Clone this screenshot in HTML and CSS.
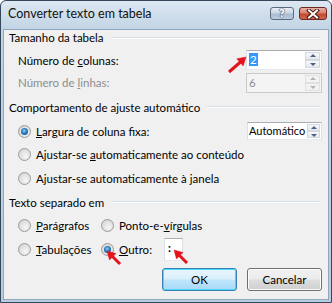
FILE: index.html
```html
<!DOCTYPE html>
<html>
<head>
<meta charset="utf-8">
<link rel="stylesheet" href="styles.css">
</head>
<body>
<div class="win">
  <div class="titlebar">
    <span class="title">Converter texto em tabela</span>
    <div class="tbtns">
      <div class="tb help"><span>?</span></div>
      <div class="tb close">
        <svg width="14" height="10" viewBox="0 0 14 10"><path d="M3 1.5 L11 8.5 M11 1.5 L3 8.5" stroke="#4a1a12" stroke-width="4" stroke-linecap="square"/><path d="M3 1.5 L11 8.5 M11 1.5 L3 8.5" stroke="#ffffff" stroke-width="2" stroke-linecap="square"/></svg>
      </div>
    </div>
  </div>
  <div class="client">
    <div class="ghead h1"><span>Tamanho da tabela</span><i class="rule"></i></div>
    <div class="row r-col">
      <span class="lbl">Número de <u>c</u>olunas:</span>
      <div class="spin"><span class="val"><span class="sel">2</span></span><div class="sbtns"><b class="up"></b><b class="dn"></b></div></div>
    </div>
    <div class="row r-lin">
      <span class="lbl dis">Número de <u>l</u>inhas:</span>
      <div class="spin disabled"><span class="val">6</span><div class="sbtns"><b class="up"></b><b class="dn"></b></div></div>
    </div>
    <div class="ghead h2"><span>Comportamento de ajuste automático</span><i class="rule"></i></div>
    <div class="row r-1">
      <label class="radio"><i class="rb on"></i><span><u>L</u>argura de coluna fixa:</span></label>
      <div class="spin auto"><span class="val">Automático</span><div class="sbtns"><b class="up"></b><b class="dn"></b></div></div>
    </div>
    <div class="row r-2">
      <label class="radio"><i class="rb"></i><span>Ajustar-se <u>a</u>utomaticamente ao conteúdo</span></label>
    </div>
    <div class="row r-3">
      <label class="radio"><i class="rb"></i><span>Ajustar-se automaticamente à <u>j</u>anela</span></label>
    </div>
    <div class="ghead h3"><span>Texto separado em</span><i class="rule"></i></div>
    <div class="row r-p">
      <label class="radio c1"><i class="rb"></i><span><u>P</u>arágrafos</span></label>
      <label class="radio"><i class="rb"></i><span>Ponto-e-<u>v</u>írgulas</span></label>
    </div>
    <div class="row r-t">
      <label class="radio c1"><i class="rb"></i><span><u>T</u>abulações</span></label>
      <label class="radio c2"><i class="rb on"></i><span><u>O</u>utro:</span></label>
      <div class="other">:</div>
    </div>
    <div class="buttons">
      <div class="btn def">OK</div>
      <div class="btn">Cancelar</div>
    </div>
  </div>
  <svg class="arrows" width="332" height="303" viewBox="0 0 332 303">
    <g fill="#e3141c" stroke="#e3141c">
      <line x1="229" y1="72" x2="240.5" y2="62" stroke-width="3"/>
      <polygon points="246,57 243.2,66 236.8,58.8" stroke-width="0.5"/>
      <line x1="120" y1="264" x2="112.5" y2="256.5" stroke-width="3"/>
      <polygon points="107,251 116,253.5 109.5,260" stroke-width="0.5"/>
      <line x1="187" y1="263" x2="179.5" y2="255.5" stroke-width="3"/>
      <polygon points="174,250 183,252.5 176.5,259" stroke-width="0.5"/>
    </g>
  </svg>
</div>
</body>
</html>
```

FILE: styles.css
```css
* { box-sizing: border-box; }
html, body { margin: 0; padding: 0; }
body {
  width: 332px;
  height: 303px;
  overflow: hidden;
  background: #ffffff;
  font-family: Lato, "Noto Sans", sans-serif;
  font-size: 11.5px;
  color: #000;
}
u { text-decoration: underline; text-underline-offset: 1px; }

.win {
  position: relative;
  width: 332px;
  height: 303px;
  border: 1px solid #34475a;
  border-radius: 6px 6px 0 0;
  background: linear-gradient(#dde8f2 0px, #cfdeeb 14px, #c2d4e5 28px, #b9cde0 100%);
  display: flex;
  flex-direction: column;
  padding: 0 2px 2px 2px;
}

.titlebar {
  height: 28px;
  display: flex;
  justify-content: space-between;
  align-items: flex-start;
  padding-left: 5px;
}
.title { line-height: 26px; font-size: 12.5px; color: #111; }
.tbtns { display: flex; gap: 5px; padding-top: 6px; padding-right: 2px; }
.tb {
  height: 13px;
  border: 1px solid #5a6a7c;
  border-radius: 3px;
  display: flex;
  align-items: center;
  justify-content: center;
}
.help {
  width: 24px;
  background: linear-gradient(#e6eef6 0%, #c9d6e4 45%, #aabcd1 55%, #b9cbe0 100%);
}
.help span {
  font-family: "DejaVu Sans", sans-serif;
  font-weight: bold;
  font-size: 11px;
  line-height: 11px;
  color: #fff;
  text-shadow: 0 0 1px #2c3e52, 0 0 1px #2c3e52, 0 0 1px #2c3e52;
}
.close {
  width: 28px;
  border-color: #6e2a20;
  background: linear-gradient(#eab1a6 0%, #d9836f 45%, #c4482f 55%, #d0694c 100%);
}
.close svg { display: block; }

.client {
  flex: 1;
  background: #f0f0f0;
  border: 1px solid #8fa6bc;
  padding: 0 6px 0 5px;
  display: flex;
  flex-direction: column;
}

.ghead {
  display: flex;
  align-items: center;
  gap: 7px;
  padding-right: 2px;
}
.ghead .rule {
  flex: 1;
  height: 2px;
  border-top: 1px solid #d5dfe5;
  border-bottom: 1px solid #ffffff;
}
.h1 { height: 15px; }
.h2 { height: 26px; }
.h3 { height: 24px; }

.row {
  display: flex;
  align-items: center;
  justify-content: space-between;
  padding-left: 9px;
}
.r-col { height: 22px; margin-top: 4px; }
.r-lin { height: 23px; }
.r-1 { height: 22px; }
.r-2, .r-3 { height: 24px; }
.r-p { height: 23px; justify-content: flex-start; }
.r-t { height: 24px; justify-content: flex-start; }

.lbl.dis { color: #8d8d8d; }

.spin {
  width: 76px;
  height: 20px;
  background: #fff;
  border: 1px solid #abadb3;
  border-left-color: #dbdfe6;
  border-right-color: #dbdfe6;
  border-bottom-color: #e3e9ef;
  display: flex;
}
.spin .val { flex: 1; padding-left: 2px; line-height: 17px; white-space: nowrap; }
.sel { background: #3399ff; color: #fff; padding: 0 1px; }
.sbtns {
  width: 17px;
  flex: none;
  display: flex;
  flex-direction: column;
  padding: 1px;
  gap: 0;
}
.sbtns b {
  flex: 1;
  border: 1px solid #d4d9df;
  background: linear-gradient(#f7f9fb, #e3e8ee);
  position: relative;
}
.sbtns b::after {
  content: "";
  position: absolute;
  left: 50%;
  top: 50%;
  margin-left: -3px;
  border-left: 3px solid transparent;
  border-right: 3px solid transparent;
}
.sbtns .up::after { margin-top: -2px; border-bottom: 3px solid #4d6185; }
.sbtns .dn::after { margin-top: -1px; border-top: 3px solid #4d6185; }

.spin.disabled { background: #f4f4f4; border-color: #c9c9c9; }
.spin.disabled .val { color: #8d8d8d; }
.spin.disabled .sbtns b { border-color: #e0e0e0; background: #f2f2f2; }
.spin.disabled .sbtns .up::after { border-bottom-color: #b4b4b4; }
.spin.disabled .sbtns .dn::after { border-top-color: #b4b4b4; }

.spin.auto { height: 18px; width: 75px; }
.spin.auto .val { line-height: 15px; font-size: 11px; padding-left: 1px; }
.spin.auto .sbtns { width: 15px; }

.radio { display: flex; align-items: center; gap: 5px; }
.radio.c1 { width: 83px; }
.rb {
  width: 13px;
  height: 13px;
  border-radius: 50%;
  border: 1px solid #9a9a9a;
  background: radial-gradient(circle at 60% 65%, #f6f6f6 0%, #e2e2e2 50%, #cfcfcf 100%);
  position: relative;
  flex: none;
}
.rb.on::after {
  content: "";
  position: absolute;
  left: 2px;
  top: 2px;
  width: 7px;
  height: 7px;
  border-radius: 50%;
  background: radial-gradient(circle at 45% 40%, #8fd0f5 0%, #2b7bbb 45%, #12406e 100%);
}

.other {
  margin-left: 12px;
  width: 19px;
  height: 23px;
  background: #fff;
  border: 1px solid #abadb3;
  border-left-color: #dbdfe6;
  border-right-color: #dbdfe6;
  border-bottom-color: #e3e9ef;
  padding-left: 3px;
  line-height: 18px;
  font-weight: bold;
}

.buttons {
  margin-top: 7px;
  display: flex;
  justify-content: flex-end;
  gap: 10px;
  padding-right: 0;
}
.btn {
  width: 75px;
  height: 23px;
  border: 1px solid #707070;
  border-radius: 3px;
  background: linear-gradient(#f2f2f2 0%, #ebebeb 48%, #dddddd 52%, #cfcfcf 100%);
  box-shadow: inset 0 0 0 1px #fcfcfc;
  display: flex;
  align-items: center;
  justify-content: center;
}
.btn.def {
  border-color: #3c7fb1;
  box-shadow: inset 0 0 0 1px #48d8fb;
  background: linear-gradient(#eaf6fd 0%, #d9f0fc 48%, #bee6fd 52%, #a7d9f5 100%);
}

.arrows { position: absolute; left: -1px; top: -1px; pointer-events: none; }
```
